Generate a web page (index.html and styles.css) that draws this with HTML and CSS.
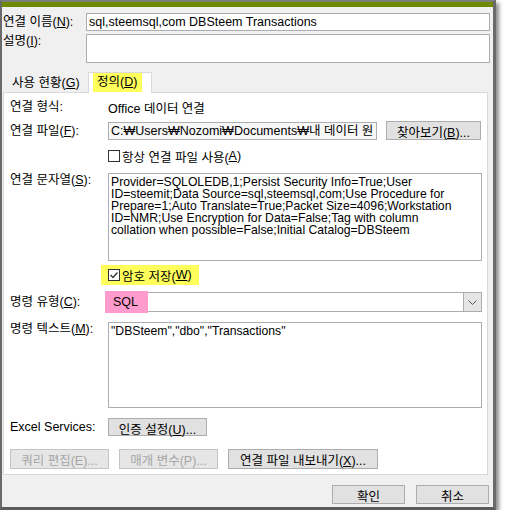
FILE: index.html
```html
<!DOCTYPE html>
<html lang="ko">

<head>
    <meta charset="UTF-8">
    <meta name="viewport" content="width=device-width, initial-scale=1.0">
    <link rel="stylesheet" href="styles.css">
    <title>연결 속성</title>
</head>

<body>
    <div class="dialog">
        <div class="titlebar"></div>

        <div class="head">
            <span class="label">연결 이름(<u>N</u>):</span>
            <div class="field name-field">sql,steemsql,com DBSteem Transactions</div>
            <span class="label top">설명(<u>I</u>):</span>
            <div class="field desc-field"></div>
        </div>

        <div class="tabs">
            <div class="tab">사용 현황(<u>G</u>)</div>
            <div class="tab active"><span class="hl-yellow">정의(<u>D</u>)</span></div>
        </div>

        <div class="panel">
            <div class="row r1">
                <span class="label">연결 형식:</span>
                <span>Office 데이터 연결</span>
            </div>
            <div class="row r2">
                <span class="label">연결 파일(<u>F</u>):</span>
                <div class="field file-field">C:₩Users₩Nozomi₩Documents₩내 데이터 원</div>
                <button class="btn browse">찾아보기(<u>B</u>)...</button>
            </div>
            <div class="row r3">
                <span class="label"></span>
                <label class="check"><span class="box"></span>항상 연결 파일 사용(<u>A</u>)</label>
            </div>
            <div class="row r4 tall">
                <span class="label">연결 문자열(<u>S</u>):</span>
                <div class="field memo conn">Provider=SQLOLEDB,1;Persist Security Info=True;User<br>ID=steemit;Data Source=sql,steemsql,com;Use Procedure for<br>Prepare=1;Auto Translate=True;Packet Size=4096;Workstation<br>ID=NMR;Use Encryption for Data=False;Tag with column<br>collation when possible=False;Initial Catalog=DBSteem</div>
            </div>
            <div class="row r5">
                <span class="label"></span>
                <label class="check hl-yellow save">
                    <span class="box"><svg width="10" height="10" viewBox="0 0 10 10"><polyline points="1.5,5 4,7.5 8.5,2.5" fill="none" stroke="#333" stroke-width="1.3"/></svg></span>암호 저장(<u>W</u>)
                </label>
            </div>
            <div class="row r6">
                <span class="label">명령 유형(<u>C</u>):</span>
                <div class="combo">
                    <span class="hl-pink">SQL</span>
                    <span class="drop"><svg width="9" height="5" viewBox="0 0 9 5"><polyline points="0.5,0.5 4.5,4.5 8.5,0.5" fill="none" stroke="#555" stroke-width="1"/></svg></span>
                </div>
            </div>
            <div class="row r7 tall">
                <span class="label">명령 텍스트(<u>M</u>):</span>
                <div class="field memo cmd">"DBSteem","dbo","Transactions"</div>
            </div>
            <div class="row r8">
                <span class="label">Excel Services:</span>
                <button class="btn auth">인증 설정(<u>U</u>)...</button>
            </div>
            <div class="row r9">
                <button class="btn off" disabled>쿼리 편집(E)...</button>
                <button class="btn off" disabled>매개 변수(P)...</button>
                <button class="btn export">연결 파일 내보내기(<u>X</u>)...</button>
            </div>
        </div>

        <div class="footer">
            <button class="btn ok">확인</button>
            <button class="btn ok">취소</button>
        </div>
    </div>
</body>

</html>
```

FILE: styles.css
```css
* {
    box-sizing: border-box;
    margin: 0;
    padding: 0;
}

body {
    background: #fff;
    font-family: "Liberation Sans", "Noto Sans CJK KR", sans-serif;
    font-size: 12.5px;
    color: #000;
}

u {
    text-decoration: underline;
    text-underline-offset: 1px;
}

.dialog {
    width: 496px;
    height: 510px;
    background: #f0f0f0;
    border-top: 2px solid #7d7d7d;
    border-left: 2px solid #6a6a6a;
    border-right: 3px solid #6a6a6a;
    border-bottom: 3px solid #5c5c5c;
    box-shadow: 3px 3px 4px rgba(0, 0, 0, 0.45);
    display: flex;
    flex-direction: column;
}

.titlebar {
    height: 5px;
    background: #718b00;
}

.head {
    display: grid;
    grid-template-columns: 83px 1fr;
    row-gap: 3px;
    padding: 6px 3px 0 1px;
}

.label {
    white-space: nowrap;
    line-height: 18px;
}

.label.top {
    line-height: 14px;
}

.field {
    background: #fff;
    border: 1px solid #abadb3;
    padding: 0 2px;
    white-space: nowrap;
    overflow: hidden;
}

.name-field {
    height: 18px;
    line-height: 16px;
}

.desc-field {
    height: 29px;
}

.tabs {
    display: flex;
    align-items: flex-end;
    margin-top: 9px;
    padding-left: 1px;
    height: 21px;
    margin-bottom: -1px;
    position: relative;
    z-index: 1;
}

.tab {
    width: 85px;
    height: 19px;
    line-height: 19px;
    padding-left: 9px;
    white-space: nowrap;
}

.tab.active {
    width: 64px;
    height: 21px;
    padding: 0 0 0 4px;
    background: #fff;
    border: 1px solid #d9d9d9;
    border-bottom: none;
}

.hl-yellow {
    background: #ffff5c;
}

.tab .hl-yellow {
    display: block;
    width: 49px;
    height: 19px;
    line-height: 19px;
    padding-left: 4px;
}

.panel {
    margin: 0 5px 0 1px;
    height: 383px;
    background: #fff;
    border: 1px solid #d9d9d9;
    padding: 0 5px 0 6px;
    display: flex;
    flex-direction: column;
}

.row {
    display: flex;
    align-items: center;
}

.row .label {
    width: 98px;
    flex: none;
}

.row.tall {
    align-items: flex-start;
}

.row.tall .label {
    line-height: 14px;
}

.r1 { margin-top: 5px; height: 18px; }
.r2 { margin-top: 5px; height: 19px; }
.r3 { margin-top: 7px; height: 18px; }
.r4 { margin-top: 8px; }
.r5 { margin-top: 4px; height: 20px; }
.r6 { margin-top: 6px; height: 22px; }
.r7 { margin-top: 9px; }
.r8 { margin-top: 10px; height: 18px; }
.r9 { margin-top: 13px; height: 20px; gap: 10px; }

.file-field {
    width: 269px;
    height: 18px;
    line-height: 16px;
    background: #f7f7f7;
}

.btn {
    font-family: inherit;
    font-size: 12.5px;
    color: #000;
    background: #e1e1e1;
    border: 1px solid #adadad;
    white-space: nowrap;
    padding: 0;
}

.browse {
    margin-left: 9px;
    width: 95px;
    height: 19px;
}

.check {
    display: flex;
    align-items: center;
    white-space: nowrap;
}

.box {
    width: 12px;
    height: 12px;
    border: 1px solid #333;
    background: #fff;
    margin-right: 2px;
    display: flex;
    align-items: center;
    justify-content: center;
}

.save {
    margin-left: -7px;
    padding-left: 7px;
    width: 98px;
    height: 20px;
}

.memo {
    flex: 1;
    padding: 2px 2px;
    font-size: 12.2px;
    line-height: 12px;
}

.conn {
    height: 88px;
}

.cmd {
    height: 86px;
}

.combo {
    flex: 1;
    height: 20px;
    border: 1px solid #acacac;
    background: #fff;
    display: flex;
    justify-content: space-between;
    align-items: center;
}

.hl-pink {
    background: #ff9ccd;
    width: 43px;
    height: 22px;
    line-height: 22px;
    margin-left: -4px;
    padding-left: 8px;
}

.drop {
    width: 18px;
    height: 18px;
    background: #e5e5e5;
    border-left: 1px solid #acacac;
    display: flex;
    align-items: center;
    justify-content: center;
}

.auth {
    width: 99px;
    height: 18px;
}

.off {
    width: 99px;
    height: 20px;
    color: #a5a5a5;
    background: #e6e6e6;
    border-color: #c4c4c4;
}

.export {
    width: 150px;
    height: 20px;
}

.footer {
    flex: 1;
    display: flex;
    justify-content: flex-end;
    align-items: flex-start;
    gap: 11px;
    padding: 10px 4px 0 0;
}

.ok {
    width: 73px;
    height: 19px;
}
```
